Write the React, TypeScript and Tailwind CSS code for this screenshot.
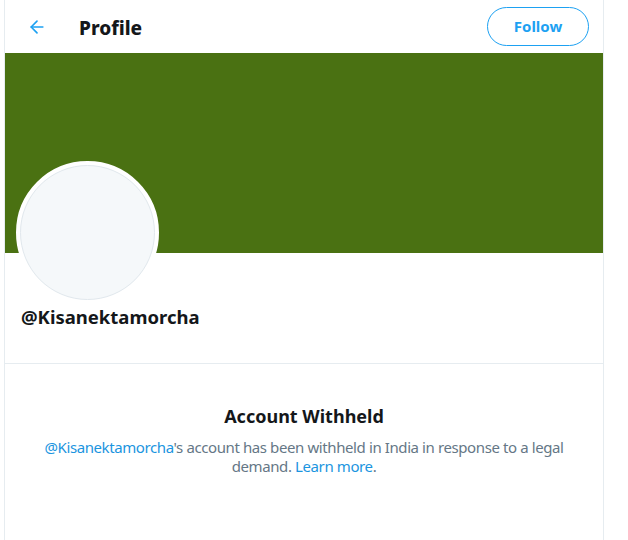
import { ArrowLeft } from 'lucide-react'

export default function App() {
  return (
    <div className="min-h-[540px] w-full bg-white" style={{ fontFamily: '"Noto Sans", "Open Sans", sans-serif' }}>
      <div className="ml-[4px] flex min-h-[540px] w-[600px] flex-col border-x border-[#e6ecf0] bg-white">
        {/* header */}
        <div className="flex h-[53px] items-center pl-[22px] pr-[14px]">
          <ArrowLeft className="h-[20px] w-[20px] text-[#1da1f2]" strokeWidth={2} />
          <h1 className="ml-[32px] mt-[4px] text-[19px] font-extrabold text-[#14171a]">Profile</h1>
          <button className="ml-auto h-[39px] w-[102px] rounded-full border border-[#1da1f2] text-[15px] font-bold text-[#1da1f2]">
            Follow
          </button>
        </div>

        {/* banner */}
        <div className="h-[200px] bg-[#4a7112]" />

        {/* avatar + handle */}
        <div className="border-b border-[#e6ecf0] px-[16px] pb-[34px]">
          <div className="-ml-[5px] -mt-[92px] h-[143px] w-[143px] rounded-full border-4 border-white bg-white">
            <div className="h-full w-full rounded-full border border-[#e1e8ed] bg-[#f5f8fa]" />
          </div>
          <div className="mt-[1px] text-[18.5px] font-bold leading-[24px] text-[#14171a]">@Kisanektamorcha</div>
        </div>

        {/* withheld notice */}
        <div className="flex flex-col items-center px-[34px] pt-[39px] text-center">
          <h2 className="text-[18px] font-bold leading-[26px] text-[#14171a]">Account Withheld</h2>
          <p className="mt-[9px] text-[15px] leading-[19px] tracking-[-0.4px] text-[#657786]">
            <span className="text-[#1b95e0]">@Kisanektamorcha</span>'s account has been withheld in India in response to a legal demand.{' '}
            <span className="text-[#1b95e0]">Learn more</span>.
          </p>
        </div>
      </div>
    </div>
  )
}
